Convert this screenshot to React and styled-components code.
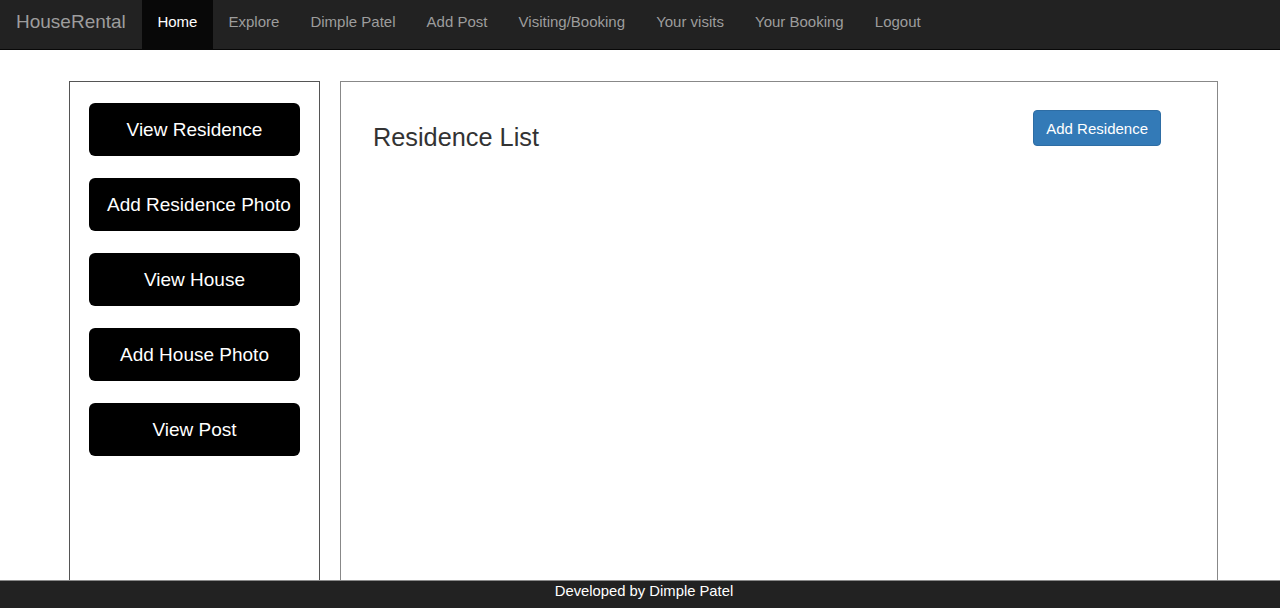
import React from "react";
import styled, { createGlobalStyle } from "styled-components";

const Global = createGlobalStyle`
  html, body { margin: 0; padding: 0; background: #fff; }
  body {
    font-family: "Liberation Sans", Arial, Helvetica, sans-serif;
    font-size: 15px;
    color: #333;
  }
  * { box-sizing: border-box; }
`;

const NavBar = styled.nav`
  height: 50px;
  background: #222;
  border-bottom: 1px solid #080808;
  display: flex;
  align-items: stretch;
`;

const Brand = styled.a`
  padding: 0 16px;
  font-size: 19px;
  line-height: 43px;
  color: #9d9d9d;
  text-decoration: none;
`;

const NavList = styled.ul`
  display: flex;
  list-style: none;
  margin: 0;
  padding: 0;
`;

const NavItem = styled.li`
  display: flex;
`;

const NavLink = styled.a`
  display: block;
  padding: 0 15.55px;
  line-height: 43px;
  font-size: 15px;
  text-decoration: none;
  color: ${(p) => (p.$active ? "#fff" : "#9d9d9d")};
  background: ${(p) => (p.$active ? "#080808" : "transparent")};
`;

const Main = styled.main`
  display: flex;
  gap: 20px;
  padding: 31px 0 0 69px;
`;

const SidePanel = styled.aside`
  width: 251px;
  min-height: 580px;
  border: 1px solid #555;
  padding: 21px 19px;
  display: flex;
  flex-direction: column;
  gap: 22px;
`;

const SideButton = styled.button`
  width: 211px;
  height: 53px;
  padding: 0 18px;
  border: none;
  border-radius: 6px;
  background: #000;
  color: #fff;
  font-family: inherit;
  font-size: 19px;
  white-space: nowrap;
  text-align: center;
  cursor: pointer;
`;

const ContentPanel = styled.section`
  width: 878px;
  min-height: 580px;
  border: 1px solid #888;
  padding: 28px 56px 0 32px;
`;

const HeaderRow = styled.div`
  display: flex;
  justify-content: space-between;
  align-items: flex-start;
`;

const Title = styled.h3`
  margin: 14px 0 0;
  font-size: 25.3px;
  font-weight: 400;
  line-height: 1.1;
  color: #333;
`;

const PrimaryButton = styled.button`
  height: 36px;
  padding: 0 12px;
  border: 1px solid #2e6da4;
  border-radius: 4px;
  background: #337ab7;
  color: #fff;
  font-family: inherit;
  font-size: 15px;
  cursor: pointer;
`;

const Footer = styled.footer`
  position: fixed;
  left: 0;
  right: 0;
  bottom: 0;
  height: 28px;
  padding-left: 8px;
  background: #222;
  border-top: 1px solid #8a8a8a;
  color: #fff;
  text-align: center;
  font-size: 14.8px;
  line-height: 20px;
`;

const navItems = [
  "Home",
  "Explore",
  "Dimple Patel",
  "Add Post",
  "Visiting/Booking",
  "Your visits",
  "Your Booking",
  "Logout",
];

const sideItems = [
  "View Residence",
  "Add Residence Photo",
  "View House",
  "Add House Photo",
  "View Post",
];

export default function App() {
  return (
    <>
      <Global />
      <NavBar>
        <Brand href="#">HouseRental</Brand>
        <NavList>
          {navItems.map((item, i) => (
            <NavItem key={item}>
              <NavLink href="#" $active={i === 0}>
                {item}
              </NavLink>
            </NavItem>
          ))}
        </NavList>
      </NavBar>
      <Main>
        <SidePanel>
          {sideItems.map((s) => (
            <SideButton key={s}>{s}</SideButton>
          ))}
        </SidePanel>
        <ContentPanel>
          <HeaderRow>
            <Title>Residence List</Title>
            <PrimaryButton>Add Residence</PrimaryButton>
          </HeaderRow>
        </ContentPanel>
      </Main>
      <Footer>Developed by Dimple Patel</Footer>
    </>
  );
}
